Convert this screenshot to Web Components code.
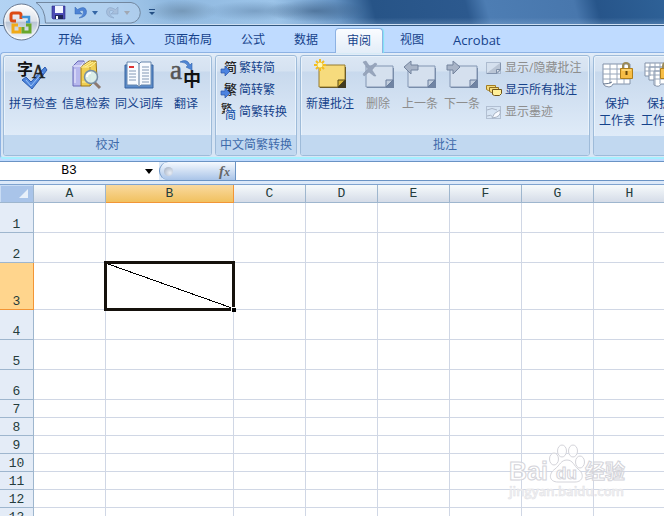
<!DOCTYPE html>
<html lang="zh-CN">
<head>
<meta charset="utf-8">
<title>Workbook</title>
<style>
html,body{margin:0;height:100%}
body{overflow:hidden;font:12px/16px "Open Sans","Noto Sans CJK SC",sans-serif;color:#15428b;background:#bfdbff}
</style>
</head>
<body>
<excel-app></excel-app>

<template id="t-app">
<style>
:host{display:flex;flex-direction:column;height:100%;min-width:0;position:relative}
sheet-grid{flex:1;min-height:0}
.ribbon{display:flex;gap:3px;padding:2px 0 1px 2px;border:1px solid #8db2e3;border-right:0;border-bottom:2px solid #a5efff;border-radius:4px 0 0 4px;background:linear-gradient(#e3edf8,#c8daef 20%,#d8e6f5);height:101px;overflow:hidden}
.ribbon svg{overflow:visible}
.stack{display:flex;flex-direction:column}
.last{flex:1 0 90px}
</style>
<title-bar></title-bar>
<ribbon-tabs></ribbon-tabs>
<section class="ribbon" aria-label="审阅">
 <ribbon-group label="校对" style="--w:209px">
  <ribbon-button label="拼写检查"><svg viewBox="0 0 32 32" width="32" height="32"><path d="M5 21l4-3 5 5L28 8l2 3-15 19z" fill="#4f86dc" stroke="#2d5cb0"/><path d="M9 21l5 6 12-14" fill="none" stroke="#9cc4f8"/><text x="0" y="16" font-size="16" font-weight="700" fill="#111">字</text><text x="15" y="19" font-size="18" font-family="Liberation Serif, serif" fill="#222" stroke="#222" stroke-width=".5">A</text></svg></ribbon-button>
  <ribbon-button label="信息检索"><svg viewBox="0 0 32 32" width="32" height="32"><path d="M3 7l5-5h6v20l-3 5H3z" fill="#b7b8ed" stroke="#6868b8"/><path d="M3 7h8l3-4M11 7v19M5 10v14" fill="none" stroke="#f0f0ff"/><path d="M11 8l8-6h7l1 17-7 8h-9z" fill="#f0cf51" stroke="#9a7415"/><path d="M11 8h9l6-5M13 7l8-5M15 8l8-5M20 9v17M12 23h7" fill="none" stroke="#fff2a0"/><path d="M20 8v19" stroke="#a98520"/><path d="M24 23l6 6" stroke="#8d7a70" stroke-width="3"/><circle cx="21" cy="18" r="6.500" fill="#d8f2ffdd" stroke="#7890a5" stroke-width="1.500"/><path d="M17 18q0-4 4-4" fill="none" stroke="#fff" stroke-width="2"/></svg></ribbon-button>
  <ribbon-button label="同义词库"><svg viewBox="0 0 32 32" width="32" height="32"><path d="M2 6h28v23H2z" fill="#5b8ccb" stroke="#37639f"/><path d="M4 3h10l2 2 2-2h10v23H18l-2 2-2-2H4z" fill="#f8fbff" stroke="#6786ad"/><path d="M15 5h2v22h-2z" fill="#a8b8cc"/><path d="M6 8h5" stroke="#d33" stroke-width="2"/><path d="M6 12h7M6 15h7M6 18h7M6 21h7M19 8h7M19 11h7M19 14h7M19 17h7M19 20h7M19 23h7" stroke="#8298b5"/></svg></ribbon-button>
  <ribbon-button label="翻译" style="--bw:36px"><svg viewBox="0 0 32 32" width="32" height="32"><text x="0" y="20" font-size="27" font-family="Liberation Serif, serif" fill="#555" stroke="#555" stroke-width=".5">a</text><text x="13" y="27" font-size="18" font-weight="700" fill="#111">中</text><path d="M10 3q7-4 10 3l2-2v7l-6-3 2-1q-2-4-8-4z" fill="#4f86d6" stroke="#3265ae" stroke-width=".6"/></svg></ribbon-button>
 </ribbon-group>
 <ribbon-group label="中文简繁转换" style="--w:82px">
  <div class="stack">
  <ribbon-row label="繁转简"><svg viewBox="0 0 16 18" width="16" height="18"><text x="3" y="13" font-size="13" font-weight="500" fill="#222">简</text><path d="M0 10h4V7l5 5-5 5v-3H0z" fill="#4c83e0" stroke="#2854aa" stroke-width=".7"/></svg></ribbon-row>
  <ribbon-row label="简转繁"><svg viewBox="0 0 16 18" width="16" height="18"><text x="3" y="13" font-size="13" font-weight="500" fill="#222">繁</text><path d="M0 10h4V7l5 5-5 5v-3H0z" fill="#4c83e0" stroke="#2854aa" stroke-width=".7"/></svg></ribbon-row>
  <ribbon-row label="简繁转换"><svg viewBox="0 0 16 18" width="16" height="18"><text x="0" y="10" font-size="11" font-weight="500" fill="#222">繁</text><rect x="4" y="6" width="11" height="12" fill="#d9e7f5"/><text x="4" y="16" font-size="11" font-weight="500" fill="#2458ac">简</text></svg></ribbon-row>
  </div>
 </ribbon-group>
 <ribbon-group label="批注" style="--w:290px;--gap:6px">
  <ribbon-button label="新建批注"><svg viewBox="0 0 32 32" width="32" height="32"><path d="M6 8h26v21H6z" fill="#403a20"/><path d="M5 6h26v15l-7 7H5z" fill="#f6db7d" stroke="#967d31"/><path d="M24 28v-7h7z" fill="#d9b638" stroke="#594a17"/><path d="M6 0v12M0 6h12M2 2l8 8M10 2l-8 8" stroke="#f2bd20" stroke-width="2"/><circle cx="6" cy="6" r="2.500" fill="#fff9b8"/></svg></ribbon-button>
  <ribbon-button label="删除" style="--bw:36px" off><svg viewBox="0 0 32 32" width="32" height="32"><path d="M5 9h27v20H5z" fill="#7084a3"/><path d="M4 7h27v14l-7 7H4z" fill="#d5e0ee" stroke="#8295b2"/><path d="M24 28v-7h7z" fill="#c1cddd" stroke="#687c9c"/><path d="M1 3l3-1 4 6 5-4 2 1-5 6 4 6h-2l-5-4-5 4-1-2 5-5z" fill="#97a5bc" stroke="#8795ad" stroke-width=".5"/></svg></ribbon-button>
  <ribbon-button label="上一条" style="--bw:36px" off><svg viewBox="0 0 32 32" width="32" height="32"><path d="M5 9h27v20H5z" fill="#7084a3"/><path d="M4 7h27v14l-7 7H4z" fill="#d5e0ee" stroke="#8295b2"/><path d="M24 28v-7h7z" fill="#c1cddd" stroke="#687c9c"/><path d="M0 8l7-6v4h7v5H7v4z" fill="#a8b4c7" stroke="#74849e"/></svg></ribbon-button>
  <ribbon-button label="下一条" style="--bw:36px" off><svg viewBox="0 0 32 32" width="32" height="32"><path d="M5 9h27v20H5z" fill="#7084a3"/><path d="M4 7h27v14l-7 7H4z" fill="#d5e0ee" stroke="#8295b2"/><path d="M24 28v-7h7z" fill="#c1cddd" stroke="#687c9c"/><path d="M14 8L7 2v4H1v5h6v4z" fill="#a8b4c7" stroke="#74849e"/></svg></ribbon-button>
  <div class="stack">
  <ribbon-row label="显示/隐藏批注" style="--rg:3px" off><svg viewBox="0 0 16 16" width="16" height="16"><path d="M.5 13.500v-11h14v11z" fill="#d5e0ee" stroke="#8394ae" stroke-dasharray="1 1"/><path d="M1 13L14 3v6l-4 4z" fill="#bac5d5"/><path d="M1 13.500h10l3.500-3.500V3" fill="none" stroke="#8394ae"/><path d="M10.500 13V9.500h4z" fill="#e0e5ed" stroke="#8090a8"/></svg></ribbon-row>
  <ribbon-row label="显示所有批注" style="--rg:3px"><svg viewBox="0 0 16 16" width="16" height="16"><path d="M.5 3.500h9v5h-7l-2-1z" fill="#f5dc7d" stroke="#a47e21"/><path d="M3.500 5.500h9v5h-7l-2-1z" fill="#f5dc7d" stroke="#927020"/><path d="M6.500 7.500h9v4l-2 2h-5l-2-1z" fill="#fff09a" stroke="#6f5519"/></svg></ribbon-row>
  <ribbon-row label="显示墨迹" style="--rg:3px" off><svg viewBox="0 0 16 16" width="16" height="16"><path d="M.5 14.500v-12h14v12z" fill="none" stroke="#8d9bb1" stroke-dasharray="1 1"/><path d="M1 12q4-2 6 1M1 6q5-3 10 0" fill="none" stroke="#a9b4c5"/><path d="M6 14q1-5 8-8 2 7-8 8z" fill="#f8faff" stroke="#a6b2c3"/></svg></ribbon-row>
  </div>
 </ribbon-group>
 <ribbon-group label="" class="last" style="--gap:6px">
  <ribbon-button label="保护 工作表" style="--bw:36px"><svg viewBox="0 0 32 32" width="32" height="32"><path d="M2 5h27v20H12q-1 3-4 3-5 0-6-4z" fill="#fff" stroke="#8291a8"/><path d="M2 10h27M2 15h27M2 20h27M9 5v20M16 5v20M23 5v20" stroke="#98a6ba"/><path d="M2 25q6 0 9-2" fill="none" stroke="#687890"/><path d="M22 10V7q0-3 3-3t3 3v3" fill="none" stroke="#9b8a58" stroke-width="2"/><path d="M19.500 9.500h12v10h-12z" fill="#f7bd45" stroke="#b07f1a"/><path d="M21 11h9" stroke="#ffe79a"/><path d="M25.500 12v4" stroke="#69480b" stroke-width="2"/></svg></ribbon-button>
  <ribbon-button label="保护 工作簿" style="--bw:36px"><svg viewBox="0 0 32 32" width="32" height="32"><path d="M2 4h20v13H2z" fill="#fff" stroke="#8291a8"/><path d="M6 8h20v13H6z" fill="#fff" stroke="#8291a8"/><path d="M11 12h18v13H18q-2 4-7 1z" fill="#fff" stroke="#8291a8"/><path d="M2 8h20M2 12h24M6 16h23M11 20h18M7 4v13M12 4v22M17 4v21M23 8v17" stroke="#98a6ba"/><path d="M20 10V7q0-3 3-3t3 3v3" fill="none" stroke="#9b8a58" stroke-width="2"/><path d="M17.500 9.500h12v10h-12z" fill="#f7bd45" stroke="#b07f1a"/></svg></ribbon-button>
 </ribbon-group>
</section>
<formula-bar></formula-bar>
<sheet-grid></sheet-grid>
<page-mark></page-mark>
</template>

<template id="t-title">
<style>
:host{display:flex;align-items:flex-start;box-sizing:border-box;border-bottom:1px solid #33587f;box-shadow:inset 0 -1px #cfe0f3;position:relative;padding:2px 0 0 36px;height:26px;
background:radial-gradient(ellipse 36px 11px at 182px 11px,#64839f99,transparent),radial-gradient(ellipse 50px 10px at 255px 11px,#5f83a888,transparent),radial-gradient(ellipse 50px 11px at 315px 11px,#30507488,transparent),linear-gradient(transparent 70%,#a9c8e844),linear-gradient(75deg,#b3d3f3 0,#a7cbed 110px,#8fb8df 170px,#9cc4e9 270px,#6391c1 330px,#275487 365px,#2c598e 455px,#4d7db3 475px,#4877ad 560px,#27558a 582px,#2e6197 100%)}
.qat{display:flex;align-items:center;height:21px;width:106px;box-sizing:border-box;padding-left:15px;position:relative}
.qat>svg{position:absolute;left:0;top:0}
button{border:0;background:none;padding:0;display:flex;position:relative}
.save{margin-right:8px}.ar{margin:0 8px 0 5px}.more{margin:6px 0 0 6px}
.orb{position:absolute;left:2px;top:1px;z-index:3}
</style>
<button class="orb" aria-label="Office"><svg width="40" height="40" viewBox="0 0 40 40"><defs><linearGradient id="o" x2="0" y2="1"><stop stop-color="#fff"/><stop offset=".48" stop-color="#dde2ea"/><stop offset=".5" stop-color="#b9c4d4"/><stop offset="1" stop-color="#f6faff"/></linearGradient></defs><circle cx="19.500" cy="21" r="18" fill="url(#o)" stroke="#687991"/><circle cx="19.500" cy="21" r="16.500" fill="none" stroke="#fff" stroke-opacity=".7"/><g fill="none" stroke-width="3"><path d="M14 20h-3q-2 0-2-2v-4q0-2 2-2h6q2 0 2 2v4" stroke="#dc4b14"/><path d="M21 17v-1h6v5h-3" stroke="#3d93d6" stroke-width="2.500"/><path d="M16 24h-5v7h7v-5" stroke="#f1aa18"/><path d="M21 26v5h7v-7h-4" stroke="#68a82b"/></g></svg></button>
<div class="qat"><svg width="106" height="22" viewBox="0 0 106 22"><path d="M0 .5Q9 6 9.500 21H95a10.300 10.300 0 0 0 0-20.500z" fill="#b9d4f099" stroke="#72879f"/></svg>
<button class="save" aria-label="保存"><svg width="15" height="15" viewBox="0 0 15 15"><path d="M1 1h13v13H2l-1-1z" fill="#4b4bb5" stroke="#292982" stroke-width=".6"/><path d="M4 1h8v7H4z" fill="#f1f4ff"/><path d="M4 10h8v4H4z" fill="#1e2558"/><path d="M5 11h2v3H5z" fill="#fff"/></svg></button>
<button aria-label="撤消"><svg width="13" height="15" viewBox="0 0 13 15"><path d="M1 2v7h7L5.500 6.500Q9 4 9.500 7q0 4-4.500 6 8-1 7.500-7Q11 0 3.500 4.500z" fill="#4e83d5" stroke="#3266b3" stroke-width=".5"/></svg></button>
<button class="ar" aria-label="撤消列表"><svg width="6" height="4"><path d="M0 0h6L3 4z" fill="#3566a5"/></svg></button>
<button aria-label="恢复"><svg width="13" height="15" viewBox="0 0 13 15"><path d="M12 2v7H5l2.500-2.500Q4 4 3.500 7q0 4 4.500 6-8-1-7.500-7Q2 0 9.500 4.500z" fill="#a7bfdc" stroke="#839fc2" stroke-width=".5"/></svg></button>
<button class="ar" aria-label="恢复列表"><svg width="6" height="4"><path d="M0 0h6L3 4z" fill="#a1a8b3"/></svg></button>
</div>
<button class="more" aria-label="自定义快速访问工具栏"><svg width="8" height="8" viewBox="0 0 8 8"><path d="M1 1.500h6" stroke="#234e83"/><path d="M1 4h6L4 7z" fill="#234e83"/></svg></button>
</template>

<template id="t-tabs">
<style>
:host{display:flex;gap:5px;height:26px;padding-left:46px;align-items:flex-end;background:#bfdbff}
button{font:inherit;color:#15428b;border:1px solid transparent;border-bottom:0;background:none;padding:0 11px;height:25px;line-height:22px;white-space:nowrap}
.on{background:linear-gradient(#fafcff,#e3edf8);border-color:#8db2e3;border-radius:4px 4px 0 0;box-shadow:1px 0 1px #7de4f5;margin-bottom:-1px;z-index:1}
.en{font-size:13px}
</style>
<button>开始</button><button>插入</button><button>页面布局</button><button>公式</button><button>数据</button><button class="on" aria-current="page">审阅</button><button>视图</button><button class="en">Acrobat</button>
</template>

<template id="t-group">
<style>
:host{display:flex;flex-direction:column;flex:0 0 var(--w,auto);min-width:0;box-sizing:border-box;border:1px solid #9ebbd9;border-radius:3px;box-shadow:inset 0 0 0 1px #e9f2fb;overflow:hidden;background:linear-gradient(#dce7f4 0,#d5e2f1 15px,#c8d9ed 16px,#dfebf8 80px)}
.c{display:flex;gap:var(--gap,5px);padding:1px 5px 0;height:79px;align-items:flex-start}
.l{flex:1;text-align:center;line-height:20px;color:#3e6aaa;background:#c1d8f0;white-space:nowrap}
</style>
<div class="c"><slot></slot></div><div class="l"></div>
</template>

<template id="t-button">
<style>
:host{display:block;flex:0 0 var(--bw,48px)}
button{font:inherit;line-height:17px;color:#15428b;border:0;background:none;padding:2px 0 0;width:100%;display:flex;flex-direction:column;align-items:center;gap:4px}
button:disabled{color:#8d8d8d}
span{white-space:pre;text-align:center}
</style>
<button><slot></slot><span></span></button>
</template>

<template id="t-row">
<style>
:host{display:block}
button{font:inherit;color:#15428b;border:0;background:none;padding:0;height:22px;display:flex;align-items:center;gap:var(--rg,2px);white-space:nowrap}
button:disabled{color:#8d8d8d}
</style>
<button><slot></slot><span></span></button>
</template>

<template id="t-formula">
<style>
:host{display:flex;height:18px;margin-top:2px;border-top:1px solid #6a93c4;border-bottom:1px solid #6a93c4;background:#c5dbf6}
input{border:0;padding:0;background:#fff;outline:0;min-width:0;font:13px/18px "Liberation Mono",monospace;color:#000}
.name{width:138px;text-align:center}
button{border:0;padding:0;background:#fff;display:flex;align-items:center}
.drop{width:21px;justify-content:center}
.w{display:flex;background:#dce9f9}
.cap{width:77px;box-sizing:border-box;justify-content:space-between;padding:0 5px 0 4px;border-left:1px solid #6a93c4;border-right:1px solid #6a93c4;border-radius:10px 0 0 10px;background:linear-gradient(#f5f9fe,#a9c4e8)}
.fx{font:italic 700 15px/18px "Liberation Serif",serif;color:#666}
i{width:9px;height:9px;border-radius:50%;background:radial-gradient(circle at 65% 65%,#e9eef6,#9eabbe)}
small{font-size:12px}
.text{flex:1}
</style>
<input class="name" aria-label="名称框" value="B3"><button class="drop" aria-label="名称列表"><svg width="8" height="5"><path d="M0 0h8L4 5z" fill="#000"/></svg></button><div class="w"><button class="cap" aria-label="插入函数"><i></i><span class="fx">f<small>x</small></span></button></div><input class="text" aria-label="编辑栏">
</template>

<template id="t-sheet">
<style>
:host{display:block;overflow:hidden;background:#fff}
.edge{height:3px;background:#dce9f9;border-bottom:1px solid #7fa3cf}
table{border-collapse:separate;border-spacing:0;table-layout:fixed;width:100%;min-width:898px;font:13px/14px "Liberation Mono",monospace;color:#243c3c}
th,td{padding:0;box-sizing:border-box;border:0 solid #d0d7e5;border-width:0 1px 1px 0}
td{position:relative}
th{font-weight:400}
thead th{height:18px;background:linear-gradient(#f6fafb,#d5dce8);border-color:#9eb6ce}
thead th.s{background:linear-gradient(#f9d99f,#f1c15f);border-color:#f29536}
tbody th{vertical-align:bottom;background:#e4ecf7;border-color:#9eb6ce}
tbody th.s{background:#ffd58d;border-color:#f29536}
tr{height:18px}tr.m{height:30px}tr.t{height:47px}
thead th:first-child{background:#a9c4e9;text-align:right;line-height:0;box-shadow:inset 1px 1px #c9dcf4}
thead th svg{margin-right:4px}
.sel{position:absolute;inset:-2px;border:3px solid #15110c;z-index:2}
.sel::after{content:"";position:absolute;right:-4px;bottom:-4px;width:4px;height:4px;background:#000;border:solid #fff;border-width:1px 0 0 1px}
.sel svg{display:block;width:100%;height:100%}
</style>
<div class="edge"></div><table><colgroup></colgroup><thead></thead><tbody></tbody></table>
</template>

<template id="t-mark">
<style>
:host{position:absolute;right:36px;bottom:14px;width:120px;z-index:4;pointer-events:none}
svg{display:block;width:100%;overflow:visible}
</style>
<svg viewBox="0 0 120 58" fill="#ffffffb0" stroke="#d4d4da" stroke-width="1"><g font-family="Liberation Sans, Noto Sans CJK SC, sans-serif" font-weight="700"><text x="1" y="36" font-size="25">Bai</text><path d="M59 16c6 0 7 6 11 9 7 5 5 13-3 13H50c-9 0-10-8-3-13 5-4 6-9 12-9z"/><ellipse cx="46" cy="15" rx="4.500" ry="6"/><ellipse cx="54" cy="7" rx="4.500" ry="6"/><ellipse cx="65" cy="7" rx="4.500" ry="6"/><ellipse cx="72" cy="18" rx="4.500" ry="6"/><text x="48" y="35" font-size="17">du</text><text x="77" y="35" font-size="20">经验</text></g><text x="1" y="52" font-family="Open Sans" font-size="13" font-weight="600" fill="#f1f1f3" stroke="#e1e1e5" stroke-width=".5">jingyan.baidu.com</text></svg>
</template>

<script>
const make=(name,id,init)=>customElements.define(name,class extends HTMLElement{
  constructor(){super();this.attachShadow({mode:'open'}).append(document.getElementById(id).content.cloneNode(true));}
  connectedCallback(){if(init&&!this.ready){this.ready=true;init(this,this.shadowRoot);}}
});
make('title-bar','t-title');
make('ribbon-tabs','t-tabs');
make('ribbon-group','t-group',(e,r)=>{r.querySelector('.l').textContent=e.getAttribute('label');});
const control=(e,r)=>{r.querySelector('span').textContent=e.getAttribute('label').replace(' ','\n');r.querySelector('button').disabled=e.hasAttribute('off');};
make('ribbon-button','t-button',control);
make('ribbon-row','t-row',control);
make('formula-bar','t-formula');
make('sheet-grid','t-sheet',(e,r)=>{
  const cols=[...'ABCDEFGHIJK'];
  r.querySelector('colgroup').innerHTML='<col style="width:34px">'+cols.map((c,i)=>i===cols.length-1?'<col>':`<col style="width:${c==='B'?128:72}px">`).join('');
  r.querySelector('thead').innerHTML='<tr><th><svg width="10" height="10"><path d="M9 0v9H0z" fill="#e8f0fa"/></svg></th>'+cols.map(c=>`<th scope="col"${c==='B'?' class="s"':''}>${c}</th>`).join('')+'</tr>';
  let rows='';
  for(let n=1;n<=20;n++){
    rows+=`<tr class="${n===3?'t':n<7?'m':''}"><th scope="row"${n===3?' class="s"':''}>${n}</th>`+cols.map(c=>n===3&&c==='B'?'<td><div class="sel"><svg viewBox="0 0 125 44" preserveAspectRatio="none"><path d="M1 0L125 44" stroke="#000" fill="none" shape-rendering="crispEdges"/></svg></div></td>':'<td></td>').join('')+'</tr>';
  }
  r.querySelector('tbody').innerHTML=rows;
});
make('page-mark','t-mark');
make('excel-app','t-app');
</script>
</body>
</html>
